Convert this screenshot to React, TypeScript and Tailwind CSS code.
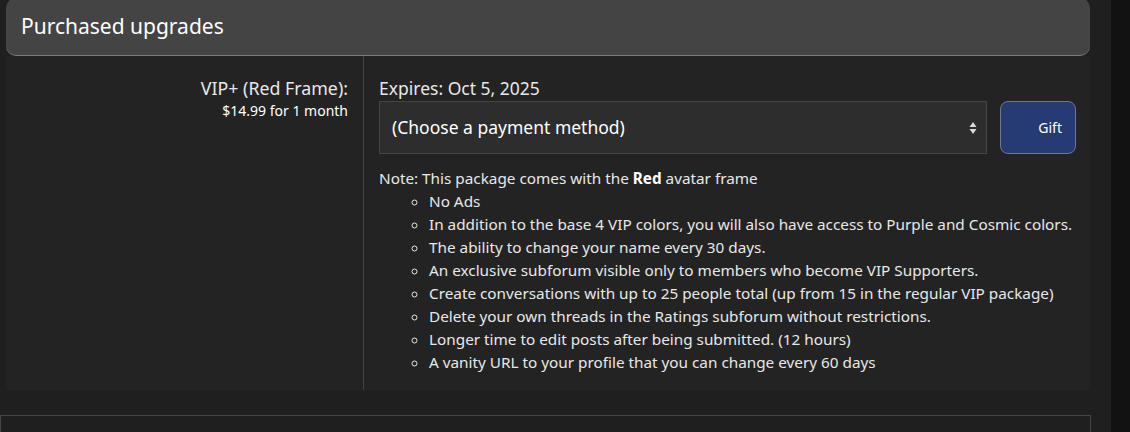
const PERKS = [
  "No Ads",
  "In addition to the base 4 VIP colors, you will also have access to Purple and Cosmic colors.",
  "The ability to change your name every 30 days.",
  "An exclusive subforum visible only to members who become VIP Supporters.",
  "Create conversations with up to 25 people total (up from 15 in the regular VIP package)",
  "Delete your own threads in the Ratings subforum without restrictions.",
  "Longer time to edit posts after being submitted. (12 hours)",
  "A vanity URL to your profile that you can change every 60 days",
];

export default function App() {
  return (
    <div className="flex h-[432px] overflow-hidden bg-[#1f1f1f] font-['Noto_Sans',sans-serif] text-[#e8e8e8]">
      <div className="w-[1111px] shrink-0">
        <div className="ml-[6px] w-[1084px]">
          <div className="-mt-[2px] flex h-[58px] items-center rounded-[10px] border-b border-[#7c7c7c] bg-[#444444] px-[15px] pt-[1px] text-[21px] text-white">
            Purchased upgrades
          </div>
          <div className="flex h-[334px] bg-[#232323]">
            <div className="w-[358px] shrink-0 border-r border-[#444444] pr-[15px] pt-[20px] text-right">
              <div className="text-[17.8px] leading-[24px]">VIP+ (Red Frame):</div>
              <div className="text-[14px] leading-[22px] text-white">$14.99 for 1 month</div>
            </div>
            <div className="flex-1 pl-[15px] pt-[20px]">
              <div className="text-[17.5px] leading-[24px]">Expires: Oct 5, 2025</div>
              <div className="mt-[1px] flex gap-[13px]">
                <div className="flex h-[53px] w-[608px] items-center justify-between border border-[#454545] bg-[#2d2d2d] pl-[12px] pr-[9px] text-[17.5px] text-white">
                  <span>(Choose a payment method)</span>
                  <svg width="8" height="14" viewBox="0 0 8 14" className="fill-[#d8d8d8]">
                    <path d="M4 1 L7.5 6 L0.5 6 Z" />
                    <path d="M0.5 8 L7.5 8 L4 13 Z" />
                  </svg>
                </div>
                <button className="flex h-[53px] w-[76px] items-center justify-end rounded-[8px] border border-[#6b779c] bg-[#263b73] pr-[13px] text-[14px] text-white">
                  Gift
                </button>
              </div>
              <div className="mt-[13px] text-[15.3px] leading-[23px]">
                <div>
                  Note: This package comes with the <b className="font-bold text-white">Red</b> avatar frame
                </div>
                <ul className="ml-[50px] list-[circle]">
                  {PERKS.map((p) => (
                    <li key={p}>{p}</li>
                  ))}
                </ul>
              </div>
            </div>
          </div>
        </div>
        <div className="mt-[25px] h-[40px] w-[1091px] border border-[#444444]" />
      </div>
      <div className="flex-1 bg-[#121212]" />
    </div>
  );
}
